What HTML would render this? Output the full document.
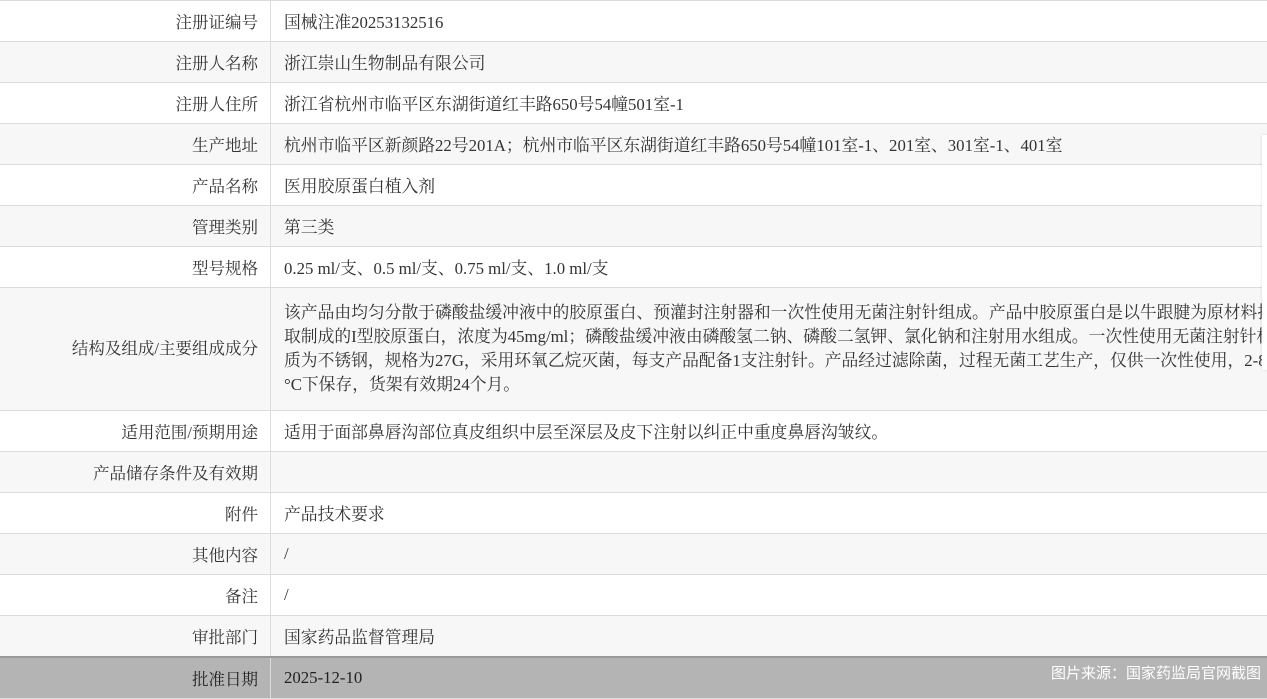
<!DOCTYPE html>
<html><head><meta charset="utf-8"><style>
body{margin:0;width:1267px;height:689px;overflow:hidden;background:#fff;font-family:"Liberation Serif","Noto Serif CJK SC",serif;font-size:16.8px;color:#333;position:relative}
table{border-collapse:collapse;width:1400px;table-layout:fixed;position:absolute;left:0;top:0}
td{border-top:1px solid #dcdcdc;border-bottom:1px solid #dcdcdc;height:40px;padding:0;white-space:nowrap;overflow:hidden}
td.l{width:258px;text-align:right;padding-right:12px;border-right:1px solid #dcdcdc;font-size:16.5px}
td.v{padding-left:13px}
tr:nth-child(even) td{background:#f7f7f7}
tr.tall td{height:122px;line-height:24px}
tr.last td{background:#b4b4b4!important;color:#222;border-top:2px solid #999}
.wm{position:absolute;right:6px;bottom:6px;color:#fff;font-family:"Liberation Sans","Noto Sans CJK SC",sans-serif;font-size:15px}
.panel{position:absolute;left:1262px;top:135px;width:10px;height:235px;background:#fff;box-shadow:0 0 3px rgba(0,0,0,.12)}
</style></head><body>
<table>
<tr><td class="l">注册证编号</td><td class="v">国械注准20253132516</td></tr>
<tr><td class="l">注册人名称</td><td class="v">浙江崇山生物制品有限公司</td></tr>
<tr><td class="l">注册人住所</td><td class="v">浙江省杭州市临平区东湖街道红丰路650号54幢501室-1</td></tr>
<tr><td class="l">生产地址</td><td class="v">杭州市临平区新颜路22号201A；杭州市临平区东湖街道红丰路650号54幢101室-1、201室、301室-1、401室</td></tr>
<tr><td class="l">产品名称</td><td class="v">医用胶原蛋白植入剂</td></tr>
<tr><td class="l">管理类别</td><td class="v">第三类</td></tr>
<tr><td class="l">型号规格</td><td class="v">0.25 ml/支、0.5 ml/支、0.75 ml/支、1.0 ml/支</td></tr>
<tr class="tall"><td class="l">结构及组成/主要组成成分</td><td class="v">该产品由均匀分散于磷酸盐缓冲液中的胶原蛋白、预灌封注射器和一次性使用无菌注射针组成。产品中胶原蛋白是以牛跟腱为原材料提<br>取制成的I型胶原蛋白，浓度为45mg/ml；磷酸盐缓冲液由磷酸氢二钠、磷酸二氢钾、氯化钠和注射用水组成。一次性使用无菌注射针材<br>质为不锈钢，规格为27G，采用环氧乙烷灭菌，每支产品配备1支注射针。产品经过滤除菌，过程无菌工艺生产，仅供一次性使用，2-8<br>°C下保存，货架有效期24个月。</td></tr>
<tr><td class="l">适用范围/预期用途</td><td class="v">适用于面部鼻唇沟部位真皮组织中层至深层及皮下注射以纠正中重度鼻唇沟皱纹。</td></tr>
<tr><td class="l">产品储存条件及有效期</td><td class="v"></td></tr>
<tr><td class="l">附件</td><td class="v">产品技术要求</td></tr>
<tr><td class="l">其他内容</td><td class="v">/</td></tr>
<tr><td class="l">备注</td><td class="v">/</td></tr>
<tr><td class="l">审批部门</td><td class="v">国家药品监督管理局</td></tr>
<tr class="last"><td class="l">批准日期</td><td class="v">2025-12-10</td></tr>
</table>
<div class="panel"></div>
<div class="wm">图片来源：国家药监局官网截图</div>
</body></html>
